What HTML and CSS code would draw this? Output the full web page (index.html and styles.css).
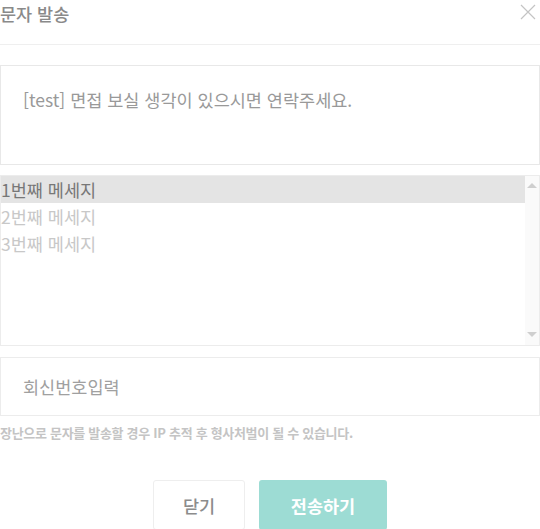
FILE: index.html
```html
<!DOCTYPE html>
<html lang="ko">
<head>
<meta charset="utf-8">
<title>문자 발송</title>
<link rel="stylesheet" href="styles.css">
</head>
<body>
<div class="modal">
  <div class="modal-header">
    <h1 class="modal-title">문자 발송</h1>
    <button class="close-btn" type="button" aria-label="닫기">
      <svg width="16" height="16" viewBox="0 0 16 16"><path d="M1 1L15 15M15 1L1 15" stroke="#c4c4c4" stroke-width="1.2" fill="none"/></svg>
    </button>
  </div>
  <div class="message-box">[test] 면접 보실 생각이 있으시면 연락주세요.</div>
  <div class="listbox">
    <ul class="options">
      <li class="option selected">1번째 메세지</li>
      <li class="option">2번째 메세지</li>
      <li class="option">3번째 메세지</li>
    </ul>
    <div class="scrollbar">
      <span class="arrow up"></span>
      <span class="arrow down"></span>
    </div>
  </div>
  <div class="reply-input">회신번호입력</div>
  <p class="notice">장난으로 문자를 발송할 경우 IP 추적 후 형사처벌이 될 수 있습니다.</p>
  <div class="actions">
    <button class="btn btn-close" type="button">닫기</button>
    <button class="btn btn-send" type="button">전송하기</button>
  </div>
</div>
</body>
</html>
```
FILE: styles.css
```css
* { box-sizing: border-box; }
html, body { margin: 0; padding: 0; background: #fff; }
body {
  font-family: "Noto Sans CJK KR", "Noto Sans", sans-serif;
  width: 540px;
  overflow: hidden;
}
.modal { width: 540px; }
.modal-header {
  height: 45px;
  border-bottom: 1px solid #efefef;
  display: flex;
  justify-content: space-between;
  align-items: flex-start;
}
.modal-title {
  margin: 0;
  font-size: 17.5px;
  font-weight: 500;
  line-height: 28px;
  color: #8a8a8a;
}
.close-btn {
  margin: 4px 4px 0 0;
  padding: 0;
  border: 0;
  background: none;
  width: 16px;
  height: 16px;
  display: block;
}
.close-btn svg { display: block; }
.message-box {
  margin-top: 20px;
  height: 100px;
  border: 1px solid #e8e8e8;
  padding: 22px 22px;
  font-size: 17.5px;
  line-height: 24px;
  color: #999;
}
.listbox {
  margin-top: 10px;
  height: 171px;
  border: 1px solid #ececec;
  display: flex;
}
.options {
  list-style: none;
  margin: 0;
  padding: 0;
  flex: 1;
}
.option {
  height: 27px;
  line-height: 27px;
  font-size: 17.5px;
  color: #c8c8c8;
  white-space: nowrap;
}
.option.selected {
  background: #e4e4e4;
  color: #777;
}
.scrollbar {
  width: 14px;
  background: #fafafa;
  position: relative;
}
.arrow {
  position: absolute;
  left: 2px;
  width: 0;
  height: 0;
  border-left: 5px solid transparent;
  border-right: 5px solid transparent;
}
.arrow.up { top: 7px; border-bottom: 5px solid #cfcfcf; }
.arrow.down { bottom: 8px; border-top: 5px solid #cfcfcf; }
.reply-input {
  margin-top: 11px;
  height: 59px;
  border: 1px solid #ececec;
  padding: 0 22px;
  font-size: 17.5px;
  line-height: 57px;
  color: #a0a0a0;
}
.notice {
  margin: 8px 0 0;
  font-size: 13px;
  font-weight: 700;
  line-height: 18px;
  color: #c4c4c4;
  letter-spacing: -0.3px;
  white-space: nowrap;
}
.actions {
  margin-top: 38px;
  display: flex;
  justify-content: center;
  gap: 14px;
}
.btn {
  height: 50px;
  border-radius: 3px;
  font-family: inherit;
  font-size: 17.5px;
  padding: 0;
}
.btn-close {
  width: 92px;
  border: 1px solid #eeeeee;
  background: #fff;
  color: #8c8c8c;
  font-weight: 500;
}
.btn-send {
  width: 128px;
  border: 0;
  background: #9ddcd4;
  color: #fff;
  font-weight: 700;
}
```
